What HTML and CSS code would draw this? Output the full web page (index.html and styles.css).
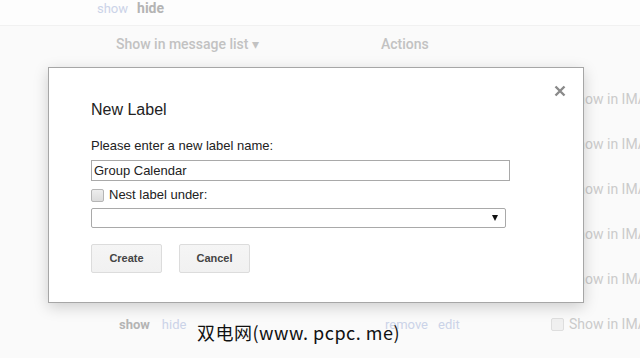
FILE: index.html
```html
<!DOCTYPE html>
<html lang="en">
<head>
    <meta charset="UTF-8">
    <title>New Label</title>
    <link rel="stylesheet" href="styles.css">
</head>
<body>
    <div class="page">
        <div class="toprow"><span class="link">show</span><span class="strong">hide</span></div>
        <div class="header">
            <span class="col1">Show in message list &#9662;</span>
            <span class="col2">Actions</span>
        </div>
        <div class="row"><span class="col1"><span class="strong">show</span><span class="link">hide</span></span><span class="col2"><span class="link">remove</span><span class="link">edit</span></span><span class="col3"><span class="check"></span>Show in IMAP</span></div>
        <div class="row"><span class="col1"><span class="strong">show</span><span class="link">hide</span></span><span class="col2"><span class="link">remove</span><span class="link">edit</span></span><span class="col3"><span class="check"></span>Show in IMAP</span></div>
        <div class="row"><span class="col1"><span class="strong">show</span><span class="link">hide</span></span><span class="col2"><span class="link">remove</span><span class="link">edit</span></span><span class="col3"><span class="check"></span>Show in IMAP</span></div>
        <div class="row"><span class="col1"><span class="strong">show</span><span class="link">hide</span></span><span class="col2"><span class="link">remove</span><span class="link">edit</span></span><span class="col3"><span class="check"></span>Show in IMAP</span></div>
        <div class="row"><span class="col1"><span class="strong">show</span><span class="link">hide</span></span><span class="col2"><span class="link">remove</span><span class="link">edit</span></span><span class="col3"><span class="check"></span>Show in IMAP</span></div>
        <div class="row"><span class="col1"><span class="strong">show</span><span class="link">hide</span></span><span class="col2"><span class="link">remove</span><span class="link">edit</span></span><span class="col3"><span class="check"></span>Show in IMAP</span></div>
    </div>

    <div class="dialog">
        <svg class="close" width="12" height="12" viewBox="0 0 12 12">
            <path d="M1.5 1.5 L10.5 10.5 M10.5 1.5 L1.5 10.5" stroke="#8a8a8a" stroke-width="2.4" fill="none"/>
        </svg>
        <div class="title">New Label</div>
        <div class="prompt">Please enter a new label name:</div>
        <div class="textbox">Group Calendar</div>
        <div class="nest"><span class="box"></span>Nest label under:</div>
        <div class="select"><span class="arrow"></span></div>
        <div class="buttons">
            <span class="btn">Create</span>
            <span class="btn">Cancel</span>
        </div>
    </div>

    <div class="watermark">双电网(www. pcpc. me)</div>
</body>
</html>
```

FILE: styles.css
```css
body {
    margin: 0;
    width: 640px;
    height: 358px;
    overflow: hidden;
    background-color: #fafafa;
    font-family: 'Liberation Sans', Arial, sans-serif;
}

/* faded gmail page under the dialog */
.page {
    width: 760px;
    color: #c6c6c6;
    font-family: Roboto, 'Liberation Sans', sans-serif;
    font-size: 13px;
    white-space: nowrap;
}

.toprow {
    height: 25px;
    padding-left: 97px;
    line-height: 17px;
    background-color: #fdfdfd;
    border-bottom: 1px solid #f1f1f1;
    display: flex;
    gap: 9px;
}

.toprow .strong {
    font-size: 14px;
}

.link {
    color: #cbd3e8;
}

.strong {
    color: #b4b4b4;
    font-weight: bold;
}

.header {
    height: 42px;
    padding-top: 9px;
    line-height: 18px;
    font-size: 14px;
    font-weight: 500;
    color: #c2c2c2;
    display: flex;
}

.header .col1 {
    width: 265px;
    padding-left: 116px;
}

.row {
    height: 45px;
    line-height: 45px;
    display: flex;
}

.row .col1 {
    width: 266px;
    padding-left: 119px;
    display: flex;
    gap: 12px;
}

.row .col2 {
    width: 166px;
    display: flex;
    gap: 10px;
}

.row .col3 {
    font-size: 14px;
    color: #cbcbcb;
    display: flex;
    align-items: center;
    gap: 5px;
}

.check {
    width: 11px;
    height: 11px;
    border: 1px solid #dedede;
    border-radius: 2px;
    background-color: #f0f0f0;
}

/* dialog */
.dialog {
    position: absolute;
    left: 48px;
    top: 67px;
    width: 450px;
    padding: 32px 42px 29px 42px;
    background-color: #fff;
    border: 1px solid #a6a6a6;
    box-shadow: 0 4px 14px rgba(0, 0, 0, 0.18);
    color: #222;
    font-size: 13px;
}

.close {
    position: absolute;
    right: 17px;
    top: 17px;
}

.title {
    font-size: 16px;
    line-height: 20px;
    margin-bottom: 18px;
}

.prompt {
    line-height: 16px;
    margin-bottom: 6px;
}

.textbox {
    width: 413px;
    height: 19px;
    line-height: 19px;
    padding: 0 2px;
    border: 1px solid #a9a9a9;
}

.nest {
    display: flex;
    align-items: center;
    gap: 5px;
    line-height: 16px;
    margin-top: 6px;
}

.box {
    width: 11px;
    height: 11px;
    border: 1px solid #b5b5b5;
    border-radius: 2px;
    background: linear-gradient(#ededed, #dcdcdc);
}

.select {
    width: 413px;
    height: 18px;
    margin-top: 5px;
    border: 1px solid #a9a9a9;
    border-radius: 2px;
    display: flex;
    justify-content: flex-end;
    align-items: center;
}

.arrow {
    width: 0;
    height: 0;
    margin-right: 7px;
    border-left: 3.5px solid transparent;
    border-right: 3.5px solid transparent;
    border-top: 6px solid #111;
}

.buttons {
    display: flex;
    gap: 17px;
    margin-top: 16px;
}

.btn {
    width: 69px;
    height: 27px;
    line-height: 27px;
    text-align: center;
    font-size: 11px;
    font-weight: bold;
    color: #444;
    background: linear-gradient(#f5f5f5, #f1f1f1);
    border: 1px solid #dcdcdc;
    border-radius: 2px;
}

.watermark {
    position: absolute;
    left: 197px;
    top: 320px;
    font-family: 'Noto Sans CJK SC', sans-serif;
    font-size: 18px;
    line-height: 24px;
    color: #111;
    letter-spacing: 0.5px;
}
```
